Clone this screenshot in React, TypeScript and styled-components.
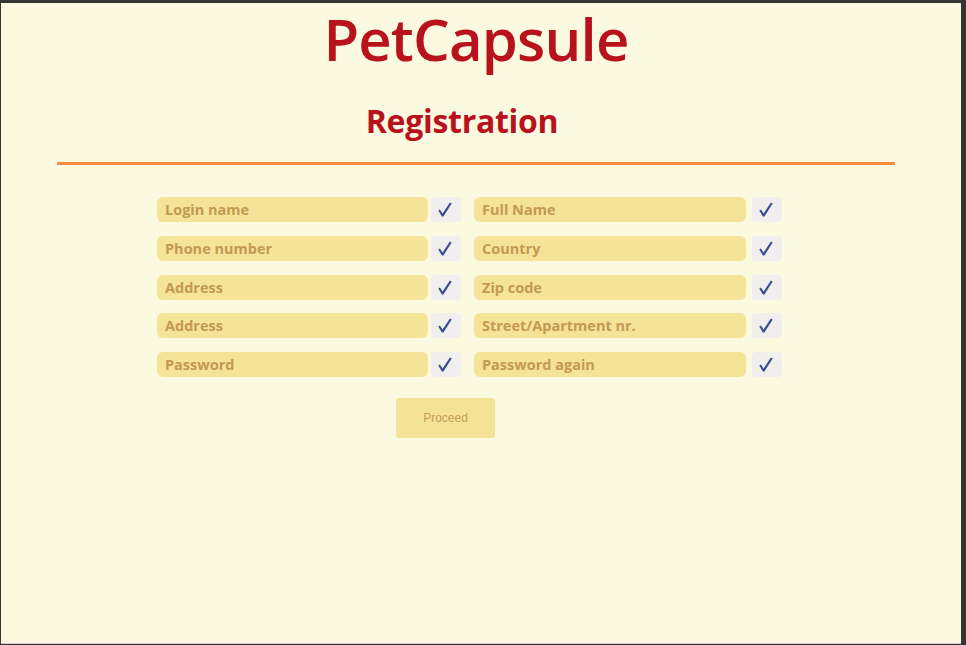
import React from "react";
import styled, { createGlobalStyle } from "styled-components";

const Global = createGlobalStyle`
  html, body { margin: 0; padding: 0; background: #353535; }
  body { font-family: "Open Sans", "Liberation Sans", sans-serif; }
`;

const Page = styled.div`
  margin: 3px 5px 1px 1px;
  height: 640px;
  background: #fcf9e1;
  border-bottom: 1px solid #cfcfcf;
  display: flex;
  flex-direction: column;
`;

const Header = styled.header`
  margin: 0 66px 0 56px;
  display: flex;
  flex-direction: column;
  align-items: center;
  border-bottom: 3px solid #f68a40;
`;

const Title = styled.h1`
  margin: 0;
  font-size: 58px;
  line-height: 72px;
  font-weight: 600;
  color: #b8121d;
  letter-spacing: -0.8px;
  white-space: nowrap;
`;

const Subtitle = styled.h2`
  margin: 0;
  padding: 26px 28px 21px 0;
  font-size: 32px;
  line-height: 40px;
  font-weight: 700;
  color: #b8121d;
  letter-spacing: -0.3px;
`;

const Form = styled.form`
  margin: 32px 0 0 156px;
  display: grid;
  grid-template-columns: 304px 308px;
  column-gap: 13px;
  row-gap: 13.75px;
`;

const Pair = styled.div<{ $gap: number }>`
  display: flex;
  gap: ${(p) => p.$gap}px;
  height: 25px;
`;

const Field = styled.input`
  flex: 1;
  min-width: 0;
  box-sizing: border-box;
  height: 25px;
  border: none;
  outline: none;
  border-radius: 6px;
  background: #f5e397;
  padding: 0 8px;
  font-family: "Open Sans", "Liberation Sans", sans-serif;
  font-weight: 700;
  font-size: 14.5px;
  color: #c39a52;
  &::placeholder { color: #c39a52; opacity: 1; }
`;

const Check = styled.span`
  width: 30px;
  height: 25px;
  flex: none;
  border-radius: 4px;
  background: #f0efee;
  color: #3a4d8d;
  display: flex;
  align-items: center;
  justify-content: center;
  padding: 0 3px 0 0;
  box-sizing: border-box;
`;

const CheckMark = () => (
  <svg width="14" height="15" viewBox="0 0 14 15" aria-hidden="true">
    <path
      d="M0.3 8.6 L1.9 7.6 L4.6 11.4 L11.9 0.4 L13.7 1.4 L5.4 14.4 L3.9 14.4 Z"
      fill="currentColor"
    />
  </svg>
);

const ButtonRow = styled.div`
  margin: 21px 0 0 395px;
  display: flex;
`;

const Button = styled.button`
  width: 99px;
  height: 40px;
  border: none;
  border-radius: 3px;
  background: #f5e395;
  color: #c59d58;
  font-family: "Liberation Sans", Arial, sans-serif;
  font-size: 12px;
  cursor: pointer;
`;

const fields: [string, string][] = [
  ["Login name", "Full Name"],
  ["Phone number", "Country"],
  ["Address", "Zip code"],
  ["Address", "Street/Apartment nr."],
  ["Password", "Password again"],
];

export default function App() {
  return (
    <>
      <Global />
      <Page>
        <Header>
          <Title>PetCapsule</Title>
          <Subtitle>Registration</Subtitle>
        </Header>
        <Form onSubmit={(e) => e.preventDefault()}>
          {fields.map(([a, b], i) => (
            <React.Fragment key={i}>
              <Pair $gap={3}>
                <Field placeholder={a} type={a.startsWith("Password") ? "password" : "text"} />
                <Check>
                  <CheckMark />
                </Check>
              </Pair>
              <Pair $gap={6}>
                <Field placeholder={b} type={b.startsWith("Password") ? "password" : "text"} />
                <Check>
                  <CheckMark />
                </Check>
              </Pair>
            </React.Fragment>
          ))}
        </Form>
        <ButtonRow>
          <Button type="submit">Proceed</Button>
        </ButtonRow>
      </Page>
    </>
  );
}
